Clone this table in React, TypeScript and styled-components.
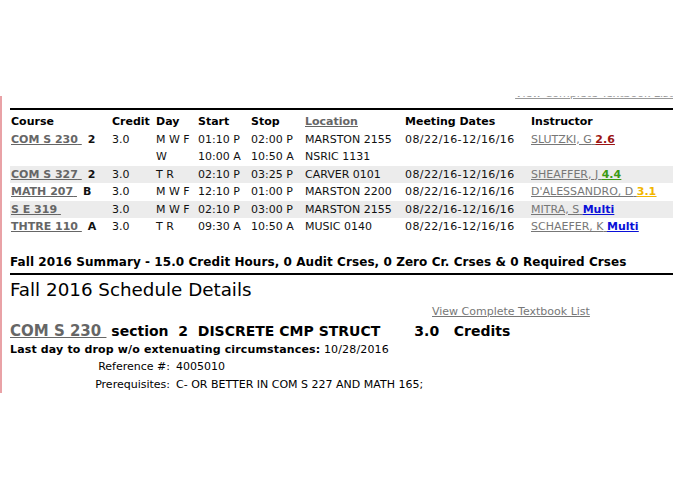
import React from "react";
import styled, { createGlobalStyle } from "styled-components";

const Global = createGlobalStyle`
  html, body { margin: 0; padding: 0; background: #fff; }
  body { font-family: "DejaVu Sans", Verdana, sans-serif; color: #000; }
`;

const Main = styled.div`
  margin-top: 96px;
  width: 663px;
  padding: 0 22px 0 8px;
  border-left: 2px solid #e9a2a6;
`;

const TopClip = styled.div`
  height: 5px;
  overflow: hidden;
`;

const TopLink = styled.a`
  display: block;
  margin-top: -9px;
  font-size: 11px;
  line-height: 14px;
  text-align: right;
  color: #999;
  text-decoration: underline;
`;

const Rule = styled.div<{ $mt?: number }>`
  height: 2px;
  background: #000;
  margin-top: ${(p) => p.$mt ?? 0}px;
`;

const Table = styled.table`
  width: 663px;
  margin-top: 3px;
  table-layout: fixed;
  border-collapse: collapse;
  font-size: 11px;
  line-height: 13.5px;
`;

const Row = styled.tr<{ $alt?: boolean }>`
  background: ${(p) => (p.$alt ? "#ececec" : "transparent")};
`;

const Th = styled.th<{ $w?: number }>`
  box-sizing: border-box;
  text-align: left;
  font-weight: bold;
  padding: 2px 1px;
  width: ${(p) => (p.$w ? `${p.$w}px` : "auto")};
  white-space: nowrap;
`;

const Td = styled.td<{ $wide?: boolean }>`
  padding: 2px 1px;
  white-space: nowrap;
  color: #111;
  letter-spacing: ${(p) => (p.$wide ? "0.4px" : "0")};
`;

const CourseLink = styled.a`
  color: #666;
  font-weight: bold;
  text-decoration: underline;
`;

const HeadLink = styled.a`
  color: #666;
  text-decoration: underline;
`;

const Section = styled.b`
  margin-left: 6px;
`;

const InstLink = styled.a`
  color: #777;
  text-decoration: underline;
`;

const Rating = styled.b<{ $c: string }>`
  color: ${(p) => p.$c};
  text-decoration: underline;
`;

const Summary = styled.div`
  margin-top: 18px;
  font-size: 12px;
  font-weight: bold;
  line-height: 16px;
  letter-spacing: 0.07px;
`;

const Title = styled.div`
  margin-top: 3px;
  font-size: 18.3px;
  line-height: 24px;
`;

const TextbookLink = styled.a`
  display: block;
  margin: 2px 0 0 422px;
  font-size: 11px;
  line-height: 15px;
  color: #777;
  text-decoration: underline;
`;

const CourseHead = styled.div`
  margin-top: 2px;
  font-size: 14px;
  font-weight: bold;
  line-height: 20px;
  white-space: pre;
`;

const HeadCourseLink = styled.a`
  font-size: 15px;
  color: #666;
  text-decoration: underline;
`;

const Line = styled.div`
  font-size: 11px;
  line-height: 17.5px;
  letter-spacing: 0.15px;
`;

const Details = styled.div`
  display: grid;
  grid-template-columns: 160px auto;
  column-gap: 6px;
  font-size: 11px;
  line-height: 17.5px;
`;

const Label = styled.div`
  text-align: right;
`;

type R = {
  course?: string;
  sec?: string;
  credit?: string;
  day: string;
  start: string;
  stop: string;
  loc: string;
  dates?: string;
  inst?: string;
  rating?: string;
  rc?: string;
  alt?: boolean;
};

const rows: R[] = [
  { course: "COM S 230", sec: "2", credit: "3.0", day: "M W F", start: "01:10 P", stop: "02:00 P", loc: "MARSTON 2155", dates: "08/22/16-12/16/16", inst: "SLUTZKI, G", rating: "2.6", rc: "#9b1414" },
  { day: "W", start: "10:00 A", stop: "10:50 A", loc: "NSRIC 1131" },
  { course: "COM S 327", sec: "2", credit: "3.0", day: "T R", start: "02:10 P", stop: "03:25 P", loc: "CARVER 0101", dates: "08/22/16-12/16/16", inst: "SHEAFFER, J", rating: "4.4", rc: "#3c9a14", alt: true },
  { course: "MATH 207", sec: "B", credit: "3.0", day: "M W F", start: "12:10 P", stop: "01:00 P", loc: "MARSTON 2200", dates: "08/22/16-12/16/16", inst: "D'ALESSANDRO, D", rating: "3.1", rc: "#f2b600" },
  { course: "S E 319", credit: "3.0", day: "M W F", start: "02:10 P", stop: "03:00 P", loc: "MARSTON 2155", dates: "08/22/16-12/16/16", inst: "MITRA, S", rating: "Multi", rc: "#0a10d8", alt: true },
  { course: "THTRE 110", sec: "A", credit: "3.0", day: "T R", start: "09:30 A", stop: "10:50 A", loc: "MUSIC 0140", dates: "08/22/16-12/16/16", inst: "SCHAEFER, K", rating: "Multi", rc: "#0a10d8" },
];

export default function App() {
  return (
    <>
      <Global />
      <Main>
        <TopClip>
          <TopLink>View Complete Textbook List</TopLink>
        </TopClip>
        <Rule $mt={7} />
        <Table>
          <thead>
            <tr>
              <Th $w={101}>Course</Th>
              <Th $w={44}>Credit</Th>
              <Th $w={42}>Day</Th>
              <Th $w={53}>Start</Th>
              <Th $w={54}>Stop</Th>
              <Th $w={100}><HeadLink>Location</HeadLink></Th>
              <Th $w={126}>Meeting Dates</Th>
              <Th>Instructor</Th>
            </tr>
          </thead>
          <tbody>
            {rows.map((r, i) => (
              <Row key={i} $alt={r.alt}>
                <Td>
                  {r.course && <CourseLink>{r.course}&nbsp;</CourseLink>}
                  {r.sec && <Section>{r.sec}</Section>}
                </Td>
                <Td>{r.credit}</Td>
                <Td>{r.day}</Td>
                <Td>{r.start}</Td>
                <Td>{r.stop}</Td>
                <Td>{r.loc}</Td>
                <Td $wide>{r.dates}</Td>
                <Td>
                  {r.inst && (
                    <InstLink>
                      {r.inst} <Rating $c={r.rc!}>{r.rating}</Rating>
                    </InstLink>
                  )}
                </Td>
              </Row>
            ))}
          </tbody>
        </Table>
        <Summary>
          Fall 2016 Summary - 15.0 Credit Hours, 0 Audit Crses, 0 Zero Cr. Crses &amp; 0 Required Crses
        </Summary>
        <Rule $mt={3} />
        <Title>Fall 2016 Schedule Details</Title>
        <TextbookLink>View Complete Textbook List</TextbookLink>
        <CourseHead>
          <HeadCourseLink>COM S 230 </HeadCourseLink>{" section  2  DISCRETE CMP STRUCT       3.0   Credits"}
        </CourseHead>
        <Line>
          <b>Last day to drop w/o extenuating circumstances:</b> 10/28/2016
        </Line>
        <Details>
          <Label>Reference #:</Label>
          <div>4005010</div>
          <Label>Prerequisites:</Label>
          <div>C- OR BETTER IN COM S 227 AND MATH 165;</div>
        </Details>
      </Main>
    </>
  );
}
